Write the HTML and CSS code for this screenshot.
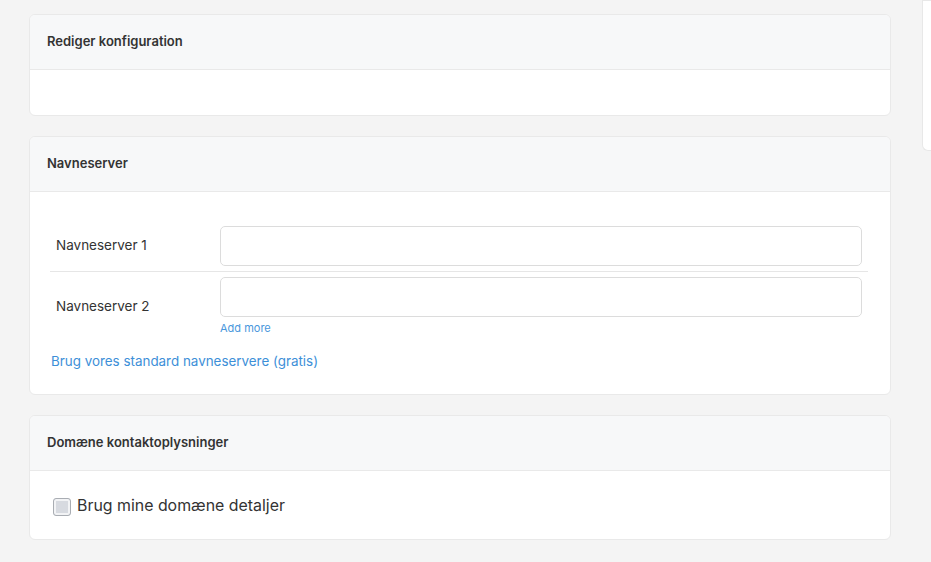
FILE: index.html
```html
<!DOCTYPE html>
<html>

<head>
    <link rel="stylesheet" href="styles.css">
</head>

<body>

    <div class="page">
        <div class="main">

            <div class="card">
                <div class="card-header">Rediger konfiguration</div>
                <div class="card-body empty"></div>
            </div>

            <div class="card">
                <div class="card-header">Navneserver</div>
                <div class="card-body ns-body">
                    <div class="ns-row first">
                        <label class="ns-label" for="ns1">Navneserver 1</label>
                        <div class="ns-field">
                            <input type="text" id="ns1" class="ns-input">
                        </div>
                    </div>
                    <div class="ns-row">
                        <label class="ns-label" for="ns2">Navneserver 2</label>
                        <div class="ns-field">
                            <input type="text" id="ns2" class="ns-input">
                            <a href="#" class="add-more">Add more</a>
                        </div>
                    </div>
                    <a href="#" class="default-ns">Brug vores standard navneservere (gratis)</a>
                </div>
            </div>

            <div class="card">
                <div class="card-header">Domæne kontaktoplysninger</div>
                <div class="card-body contact-body">
                    <label class="check">
                        <input type="checkbox" class="check-box" disabled>
                        <span>Brug mine domæne detaljer</span>
                    </label>
                </div>
            </div>

        </div>

        <div class="aside"></div>
    </div>

</body>

</html>
```

FILE: styles.css
```css
body {
    font-family: Inter, "Open Sans", Arial, sans-serif;
    background-color: #f4f4f4;
    color: #333333;
    margin: 0;
}

.page {
    display: flex;
    align-items: flex-start;
    padding: 14px 0 0 29px;
    gap: 31px;
}

.main {
    width: 862px;
    flex-shrink: 0;
}

.aside {
    flex: 1;
    height: 149px;
    margin-top: -14px;
    background-color: #ffffff;
    border: 1px solid #e8e8e8;
    border-right: none;
    border-bottom-left-radius: 6px;
}

.card {
    background-color: #ffffff;
    border: 1px solid #e9e9e9;
    border-radius: 6px;
    margin-bottom: 20px;
    overflow: hidden;
}

.card-header {
    height: 54px;
    line-height: 53px;
    padding-left: 17px;
    background-color: #f7f8f9;
    border-bottom: 1px solid #e9e9e9;
    font-size: 13px;
    font-weight: 600;
    color: #333333;
}

.card-body.empty {
    height: 45px;
}

.ns-body {
    padding: 29px 22px 24px 20px;
}

.ns-row {
    display: flex;
    align-items: flex-start;
    padding-top: 5px;
}

.ns-row.first {
    padding-bottom: 5px;
    border-bottom: 1px solid #e6e6e6;
}

.ns-label {
    width: 164px;
    padding-left: 6px;
    font-size: 13.5px;
    line-height: 38px;
    color: #333333;
}

.ns-row + .ns-row .ns-label {
    padding-top: 10px;
}

.ns-field {
    flex: 1;
    padding-right: 6px;
}

.ns-input {
    display: block;
    box-sizing: border-box;
    width: 100%;
    height: 40px;
    border: 1px solid #dcdcdc;
    border-radius: 5px;
    background-color: #ffffff;
    font-family: inherit;
    font-size: 14px;
    padding: 0 10px;
    outline: none;
}

.add-more {
    display: block;
    margin-top: 4px;
    font-size: 11px;
    line-height: 14px;
    color: #4a97dc;
    text-decoration: none;
}

.default-ns {
    display: inline-block;
    margin-top: 18px;
    margin-left: 1px;
    font-size: 13.4px;
    line-height: 17px;
    color: #3d8fd8;
    text-decoration: none;
}

.contact-body {
    padding: 24px 22px 23px 23px;
}

.check {
    display: flex;
    align-items: center;
    gap: 6px;
    font-size: 15.9px;
    line-height: 20px;
    color: #333333;
}

.check-box {
    appearance: none;
    width: 18px;
    height: 18px;
    margin: 3px 0 0 0;
    border: 1px solid #a9adb3;
    border-radius: 3px;
    background-color: #d7dae0;
    box-shadow: inset 0 0 0 2px #f2f3f5;
}
```
